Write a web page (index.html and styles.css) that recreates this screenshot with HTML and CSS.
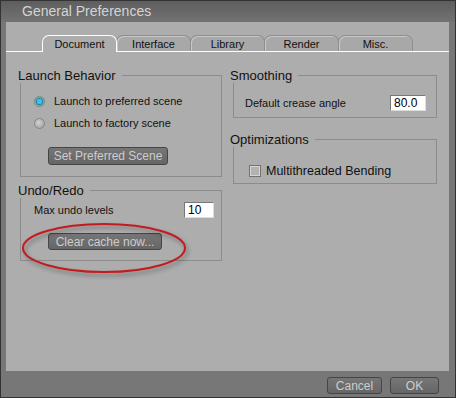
FILE: index.html
```html
<!DOCTYPE html>
<html>
    <head>
        <title>General Preferences</title>
        <link rel="stylesheet" href="styles.css">
    </head>
    <body>
        <div class="window">
            <div class="titlebar">General Preferences</div>
            <div class="panel">
                <div class="tabs">
                    <div class="tab active">Document</div>
                    <div class="tab">Interface</div>
                    <div class="tab">Library</div>
                    <div class="tab">Render</div>
                    <div class="tab">Misc.</div>
                </div>
                <div class="content">
                    <div class="col col-left">
                        <div class="group launch">
                            <div class="group-head"><span>Launch Behavior</span></div>
                            <div class="group-body">
                                <div class="option"><span class="radio checked"></span>Launch to preferred scene</div>
                                <div class="option"><span class="radio"></span>Launch to factory scene</div>
                                <button class="btn btn-scene">Set Preferred Scene</button>
                            </div>
                        </div>
                        <div class="group undo">
                            <div class="group-head"><span>Undo/Redo</span></div>
                            <div class="group-body">
                                <div class="field">
                                    <span>Max undo levels</span>
                                    <input class="num num-undo" type="text" value="10">
                                </div>
                                <button class="btn btn-cache">Clear cache now...</button>
                            </div>
                        </div>
                    </div>
                    <div class="col col-right">
                        <div class="group smoothing">
                            <div class="group-head"><span>Smoothing</span></div>
                            <div class="group-body">
                                <div class="field">
                                    <span>Default crease angle</span>
                                    <input class="num num-crease" type="text" value="80.0">
                                </div>
                            </div>
                        </div>
                        <div class="group optim">
                            <div class="group-head"><span>Optimizations</span></div>
                            <div class="group-body">
                                <div class="check-row"><span class="checkbox"></span>Multithreaded Bending</div>
                            </div>
                        </div>
                    </div>
                </div>
            </div>
            <div class="footer">
                <button class="btn btn-foot btn-cancel">Cancel</button>
                <button class="btn btn-foot btn-ok">OK</button>
            </div>
            <svg class="callout" width="170" height="58" viewBox="0 0 170 58">
                <ellipse cx="83" cy="26" rx="81" ry="24" fill="none" stroke="#c41a1e" stroke-width="2"/>
            </svg>
        </div>
    </body>
</html>
```

FILE: styles.css
```css
body {
  margin: 0;
  font-family: "Liberation Sans", Arial, sans-serif;
}
.window {
  position: relative;
  width: 456px;
  height: 398px;
  box-sizing: border-box;
  border: 1px solid #333;
  background: #777;
  display: flex;
  flex-direction: column;
}
.titlebar {
  height: 21px;
  padding-left: 21px;
  line-height: 20px;
  font-size: 14px;
  color: #d4d4d4;
  background: linear-gradient(#5e5e5e, #727272);
}
.panel {
  height: 349px;
  margin: 0 6px 0 5px;
  background: #adadad;
  display: flex;
  flex-direction: column;
}
.tabs {
  display: flex;
  margin-top: 13px;
  padding-left: 36px;
  border-bottom: 1px solid #fff;
}
.tab {
  width: 75px;
  height: 16px;
  box-sizing: border-box;
  margin-right: -1px;
  border: 1px solid #8e8e8e;
  border-bottom: none;
  border-radius: 7px 7px 0 0;
  box-shadow: inset 1px 1px 0 #c8c8c8;
  background: #a8a8a8;
  text-align: center;
  font-size: 11px;
  line-height: 16px;
  color: #111;
}
.tab.active {
  height: 17px;
  margin-bottom: -1px;
  border-color: #fff;
  box-shadow: none;
  background: #adadad;
  position: relative;
  z-index: 1;
}
.content {
  display: flex;
  gap: 8px;
  padding: 17px 12px 0 12px;
}
.col-left {
  width: 204px;
}
.col-right {
  width: 207px;
}
.group-head {
  display: flex;
  height: 14px;
  font-size: 13px;
  line-height: 14px;
  color: #111;
}
.group-head span {
  padding-right: 6px;
}
.group-head::after {
  content: "";
  flex: 1;
  align-self: flex-end;
  height: 7px;
  border-top: 1px solid #8c8c8c;
  border-right: 1px solid #8c8c8c;
}
.group-body {
  margin-left: 2px;
  border: 1px solid #8c8c8c;
  border-top: none;
  font-size: 11px;
  color: #111;
}
.col-right .group-body {
  margin-left: 3px;
}
.launch .group-body {
  height: 94px;
  padding: 7px 0 0 13px;
  box-sizing: border-box;
}
.option {
  display: flex;
  align-items: center;
  height: 22px;
}
.radio {
  width: 9px;
  height: 9px;
  margin-right: 9px;
  border: 1px solid #858585;
  border-radius: 50%;
  background: radial-gradient(circle at 40% 40%, #d2d2d2, #9a9a9a);
}
.radio.checked {
  border-color: #6a8c86;
  background: radial-gradient(circle, #35c3ef 0 2.5px, #1d7e9e 3px, #8aa8a0 4px);
}
.btn {
  display: block;
  height: 18px;
  padding: 0;
  border: 1px solid #454545;
  border-radius: 3px;
  background: linear-gradient(#767676, #666);
  color: #cdcdcd;
  font-family: "Liberation Sans", Arial, sans-serif;
  font-size: 12px;
  line-height: 16px;
}
.btn-scene {
  width: 120px;
  margin: 13px 0 0 14px;
}
.undo {
  margin-top: 7px;
}
.undo .group-body {
  height: 63px;
  padding: 4px 7px 0 13px;
  box-sizing: border-box;
}
.field {
  display: flex;
  align-items: center;
  justify-content: space-between;
}
.num {
  height: 16px;
  box-sizing: border-box;
  padding: 0 3px;
  border: 1px solid #777;
  border-right-color: #ddd;
  border-bottom-color: #ddd;
  background: #fff;
  font-family: "Liberation Sans", Arial, sans-serif;
  font-size: 12px;
  color: #000;
}
.num-undo {
  width: 30px;
}
.num-crease {
  width: 36px;
}
.btn-cache {
  width: 114px;
  height: 17px;
  margin: 15px 0 0 14px;
}
.smoothing .group-body {
  height: 35px;
  padding: 12px 10px 0 11px;
  box-sizing: border-box;
}
.optim {
  margin-top: 15px;
}
.optim .group-body {
  height: 37px;
  padding: 16px 0 0 15px;
  box-sizing: border-box;
}
.check-row {
  display: flex;
  align-items: center;
  height: 16px;
  font-size: 12.5px;
}
.checkbox {
  width: 10px;
  height: 10px;
  margin-right: 5px;
  border: 1px solid #727272;
  box-shadow: inset 0 0 0 1px #d6d6d6;
  background: #b2b2b2;
}
.footer {
  flex: 1;
  display: flex;
  justify-content: flex-end;
  gap: 8px;
  padding: 6px 16px 0 0;
}
.btn-foot {
  height: 17px;
  font-size: 12px;
}
.btn-cancel {
  width: 55px;
}
.btn-ok {
  width: 49px;
}
.callout {
  position: absolute;
  left: 20px;
  top: 221px;
  filter: drop-shadow(2px 3px 2px rgba(0, 0, 0, 0.35));
}
```
